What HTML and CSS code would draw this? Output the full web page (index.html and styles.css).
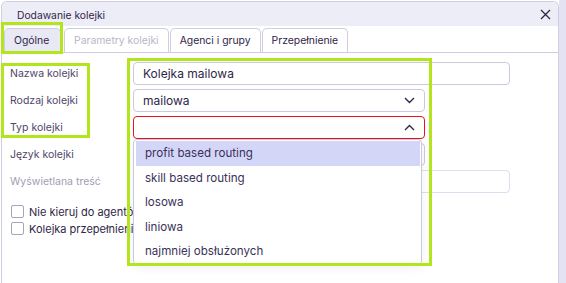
FILE: index.html
```html
<!DOCTYPE html>
<html lang="pl">
<head>
  <meta charset="UTF-8" />
  <title>Dodawanie kolejki</title>
  <link rel="stylesheet" href="styles.css">
</head>
<body>
  <div class="page">
    <div class="dialog">
      <div class="dialog-head">
        <span class="dialog-title">Dodawanie kolejki</span>
        <button class="close-btn" aria-label="Zamknij">
          <svg width="11" height="11" viewBox="0 0 11 11"><path d="M1 1L10 10M10 1L1 10" stroke="#2f2648" stroke-width="1.3" fill="none"/></svg>
        </button>
      </div>

      <div class="tabs">
        <div class="tab active">Ogólne</div>
        <div class="tab disabled">Parametry kolejki</div>
        <div class="tab">Agenci i grupy</div>
        <div class="tab">Przepełnienie</div>
        <div class="mark mark-tab"></div>
      </div>

      <div class="form">
        <div class="row">
          <label class="label">Nazwa kolejki</label>
          <div class="field wide">Kolejka mailowa</div>
        </div>
        <div class="row">
          <label class="label">Rodzaj kolejki</label>
          <div class="field select">
            <span>mailowa</span>
            <svg width="11" height="7" viewBox="0 0 11 7"><path d="M1 1L5.5 5.5L10 1" stroke="#2f2648" stroke-width="1.4" fill="none"/></svg>
          </div>
        </div>
        <div class="row">
          <label class="label">Typ kolejki</label>
          <div class="field select open">
            <span></span>
            <svg width="11" height="7" viewBox="0 0 11 7"><path d="M1 6L5.5 1.5L10 6" stroke="#2f2648" stroke-width="1.4" fill="none"/></svg>
          </div>
        </div>
        <div class="row">
          <label class="label">Język kolejki</label>
          <div class="field select"></div>
        </div>
        <div class="row">
          <label class="label muted">Wyświetlana treść</label>
          <div class="field wide disabled-field"></div>
        </div>

        <div class="checks">
          <label class="check"><span class="box"></span>Nie kieruj do agentów</label>
          <label class="check"><span class="box"></span>Kolejka przepełnienia</label>
        </div>

        <ul class="dropdown">
          <li class="hover">profit based routing</li>
          <li>skill based routing</li>
          <li>losowa</li>
          <li>liniowa</li>
          <li>najmniej obsłużonych</li>
        </ul>

        <div class="mark mark-labels"></div>
        <div class="mark mark-fields"></div>
      </div>
    </div>
    <div class="side"></div>
  </div>
</body>
</html>
```

FILE: styles.css
```css
* {
  box-sizing: border-box;
}

html, body {
  height: 100%;
  margin: 0;
  overflow: hidden;
  background: #fff;
  font-family: 'Inter', 'Noto Sans', sans-serif;
  color: #2f2648;
}

.page {
  display: flex;
  height: 100%;
  padding: 1px 0 0 1px;
}

.dialog {
  position: relative;
  width: 558px;
  border: 1px solid #cfcde0;
  border-bottom: none;
  border-radius: 6px 6px 0 0;
  background: #fff;
}

.side {
  flex: 1;
  background: #e3e3f3;
  margin-top: -1px;
}

.dialog-head {
  height: 24px;
  background: #ededf7;
  border-radius: 6px 6px 0 0;
  display: flex;
  align-items: center;
  justify-content: space-between;
  padding: 1px 6px 0 15px;
}

.dialog-title {
  font-size: 10.3px;
}

.close-btn {
  border: none;
  background: none;
  padding: 0;
  width: 14px;
  height: 14px;
  display: flex;
  align-items: center;
  justify-content: center;
  cursor: pointer;
}

.tabs {
  position: relative;
  display: flex;
  gap: 1px;
  padding: 2px 0 0 2px;
  border-bottom: 1px solid #cfcde0;
  height: 27px;
}

.tab {
  font-size: 10.4px;
  padding: 0 9px;
  display: flex;
  align-items: center;
  border: 1px solid #cfcde0;
  border-bottom: none;
  border-radius: 5px 5px 0 0;
  background: #fff;
}

.tab.active {
  background: #e9e9f5;
  width: 57px;
  margin-right: 2px;
}

.tab.disabled {
  color: #b9b6c6;
}

.form {
  position: relative;
  padding: 9px 0 0 8px;
}

.row {
  display: flex;
  align-items: center;
  height: 23px;
  margin-bottom: 4px;
}

.label {
  width: 123px;
  font-size: 10.5px;
  color: #4f4569;
}

.label.muted {
  color: #a29db4;
}

.field {
  height: 23px;
  border: 1px solid #cbc9dd;
  border-radius: 4px;
  font-size: 12px;
  padding: 0 9px;
  display: flex;
  align-items: center;
  justify-content: space-between;
  width: 292px;
}

.field.wide {
  width: 377px;
}

.field.open {
  border-color: #e8121a;
}

.field.disabled-field {
  border-color: #dedced;
}

.checks {
  display: flex;
  flex-direction: column;
  gap: 4px;
  padding: 8px 0 0 1px;
}

.check {
  display: flex;
  align-items: center;
  gap: 5px;
  font-size: 11px;
  height: 13px;
}

.box {
  width: 13px;
  height: 13px;
  border: 1px solid #a7a3bd;
  border-radius: 2px;
}

.dropdown {
  position: absolute;
  left: 131px;
  top: 86px;
  width: 289px;
  margin: 0;
  padding: 1px 1px 0 2px;
  list-style: none;
  background: #fff;
  border: 1px solid #cbc9dd;
  border-radius: 4px;
  box-shadow: 0 3px 8px rgba(60, 50, 110, 0.08);
  z-index: 2;
}

.dropdown li {
  height: 24.5px;
  font-size: 11.6px;
  padding-left: 9px;
  display: flex;
  align-items: center;
  color: #3b3158;
}

.dropdown li.hover {
  background: #d4d6f8;
}

.mark {
  position: absolute;
  border: 3px solid #b3e51c;
  z-index: 5;
  pointer-events: none;
}

.mark-tab {
  left: -1px;
  top: -4px;
  width: 62px;
  height: 32px;
}

.mark-labels {
  left: -1px;
  top: 10px;
  width: 89px;
  height: 75px;
}

.mark-fields {
  left: 125px;
  top: 5px;
  width: 305px;
  height: 208px;
}
```
